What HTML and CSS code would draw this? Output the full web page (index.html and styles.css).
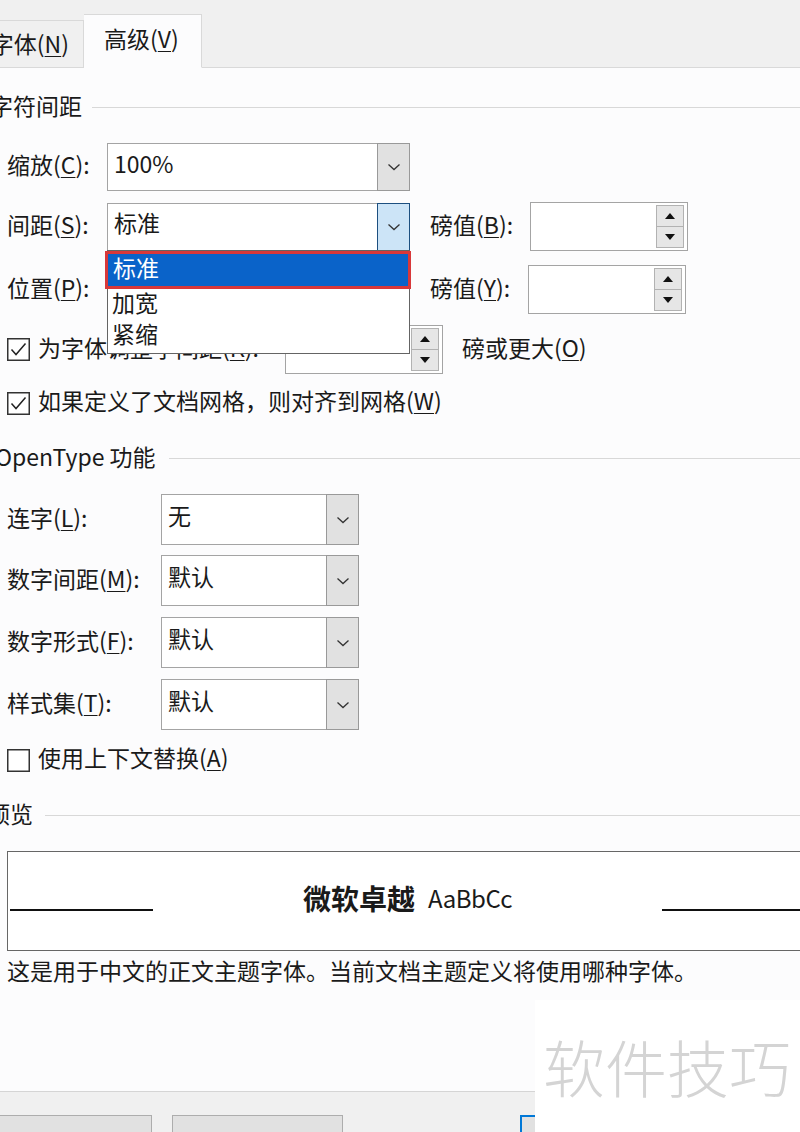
FILE: index.html
```html
<!DOCTYPE html>
<html lang="zh-CN">
<head>
<meta charset="utf-8">
<title>字体 - 高级</title>
<link rel="stylesheet" href="styles.css">
</head>
<body>
<div class="dialog">
  <div class="tabbar">
    <div class="tab">字体(<u>N</u>)</div>
    <div class="tab active">高级(<u>V</u>)</div>
  </div>

  <div class="content">
    <div class="group-head head-1"><span class="head-text">字符间距</span><span class="head-line"></span></div>

    <div class="row row-scale">
      <span class="label lbl-a">缩放(<u>C</u>):</span>
      <div class="combo combo-a">
        <span class="value">100%</span>
        <span class="drop-btn"><svg class="chev" width="14" height="8" viewBox="0 0 14 8"><polyline points="1.5,1.5 7,6.5 12.5,1.5" fill="none" stroke="#333" stroke-width="1.3"/></svg></span>
      </div>
    </div>

    <div class="row row-spacing">
      <span class="label lbl-a">间距(<u>S</u>):</span>
      <div class="combo combo-a">
        <span class="value">标准</span>
        <span class="drop-btn hot"><svg class="chev" width="14" height="8" viewBox="0 0 14 8"><polyline points="1.5,1.5 7,6.5 12.5,1.5" fill="none" stroke="#333" stroke-width="1.3"/></svg></span>
        <ul class="droplist">
          <li class="selected">标准</li>
          <li>加宽</li>
          <li>紧缩</li>
        </ul>
      </div>
      <span class="label lbl-pt">磅值(<u>B</u>):</span>
      <div class="spin">
        <div class="spin-btns"><span class="sb"><i class="tri-up"></i></span><span class="sb"><i class="tri-down"></i></span></div>
      </div>
    </div>

    <div class="row row-position">
      <span class="label lbl-a">位置(<u>P</u>):</span>
      <div class="combo combo-a combo-under">
        <span class="value"></span>
        <span class="drop-btn"></span>
      </div>
      <span class="label lbl-pt2">磅值(<u>Y</u>):</span>
      <div class="spin">
        <div class="spin-btns"><span class="sb"><i class="tri-up"></i></span><span class="sb"><i class="tri-down"></i></span></div>
      </div>
    </div>

    <div class="row row-kern">
      <svg class="check" width="23" height="23" viewBox="0 0 23 23"><rect x="0.75" y="0.75" width="21.5" height="21.5" fill="#fff" stroke="#333" stroke-width="1.5"/><polyline points="4.5,11.5 9,16.5 18.5,5.5" fill="none" stroke="#222" stroke-width="1.5"/></svg>
      <span class="label kern-text">为字体调整字间距(<u>K</u>):</span>
      <div class="spin spin-kern">
        <div class="spin-btns"><span class="sb"><i class="tri-up"></i></span><span class="sb"><i class="tri-down"></i></span></div>
      </div>
      <span class="label kern-after">磅或更大(<u>O</u>)</span>
    </div>

    <div class="row row-grid">
      <svg class="check" width="23" height="23" viewBox="0 0 23 23"><rect x="0.75" y="0.75" width="21.5" height="21.5" fill="#fff" stroke="#333" stroke-width="1.5"/><polyline points="4.5,11.5 9,16.5 18.5,5.5" fill="none" stroke="#222" stroke-width="1.5"/></svg>
      <span class="label check-text">如果定义了文档网格，则对齐到网格(<u>W</u>)</span>
    </div>

    <div class="group-head head-2"><span class="head-text">OpenType 功能</span><span class="head-line"></span></div>

    <div class="row row-ot ot-1">
      <span class="label lbl-b">连字(<u>L</u>):</span>
      <div class="combo combo-b">
        <span class="value">无</span>
        <span class="drop-btn"><svg class="chev" width="14" height="8" viewBox="0 0 14 8"><polyline points="1.5,1.5 7,6.5 12.5,1.5" fill="none" stroke="#333" stroke-width="1.3"/></svg></span>
      </div>
    </div>
    <div class="row row-ot ot-2">
      <span class="label lbl-b">数字间距(<u>M</u>):</span>
      <div class="combo combo-b">
        <span class="value">默认</span>
        <span class="drop-btn"><svg class="chev" width="14" height="8" viewBox="0 0 14 8"><polyline points="1.5,1.5 7,6.5 12.5,1.5" fill="none" stroke="#333" stroke-width="1.3"/></svg></span>
      </div>
    </div>
    <div class="row row-ot ot-3">
      <span class="label lbl-b">数字形式(<u>F</u>):</span>
      <div class="combo combo-b">
        <span class="value">默认</span>
        <span class="drop-btn"><svg class="chev" width="14" height="8" viewBox="0 0 14 8"><polyline points="1.5,1.5 7,6.5 12.5,1.5" fill="none" stroke="#333" stroke-width="1.3"/></svg></span>
      </div>
    </div>
    <div class="row row-ot ot-3">
      <span class="label lbl-b">样式集(<u>T</u>):</span>
      <div class="combo combo-b">
        <span class="value">默认</span>
        <span class="drop-btn"><svg class="chev" width="14" height="8" viewBox="0 0 14 8"><polyline points="1.5,1.5 7,6.5 12.5,1.5" fill="none" stroke="#333" stroke-width="1.3"/></svg></span>
      </div>
    </div>

    <div class="row row-ctx">
      <svg class="check" width="23" height="23" viewBox="0 0 23 23"><rect x="0.75" y="0.75" width="21.5" height="21.5" fill="#fff" stroke="#333" stroke-width="1.5"/></svg>
      <span class="label check-text">使用上下文替换(<u>A</u>)</span>
    </div>

    <div class="group-head head-3"><span class="head-text">预览</span><span class="head-line"></span></div>

    <div class="preview">
      <span class="pline pline-left"></span>
      <span class="sample"><b class="sample-cjk">微软卓越</b><span class="sample-latin">AaBbCc</span></span>
      <span class="pline pline-right"></span>
    </div>

    <div class="desc">这是用于中文的正文主题字体。当前文档主题定义将使用哪种字体。</div>
  </div>

  <div class="footer">
    <span class="btn btn-1">设为默认值(<u>D</u>)</span>
    <span class="btn btn-2">文字效果(<u>E</u>)...</span>
    <span class="btn btn-3">确定</span>
  </div>

  <div class="watermark">软件技巧</div>
</div>
</body>
</html>
```

FILE: styles.css
```css
* { box-sizing: border-box; }

html, body {
  margin: 0;
  padding: 0;
}

body {
  width: 800px;
  height: 1132px;
  overflow: hidden;
  background: #fcfcfd;
  font-family: "Noto Sans CJK SC", "Noto Sans", sans-serif;
  font-size: 23px;
  color: #1a1a1a;
}

u { text-decoration-thickness: 1px; text-underline-offset: 3px; }

.dialog {
  position: relative;
  display: flex;
  flex-direction: column;
  height: 1132px;
}

/* tabs */
.tabbar {
  height: 68px;
  flex: none;
  background: #f0f0f0;
  border-bottom: 1px solid #d9d9d9;
  display: flex;
  align-items: flex-end;
}

.tab {
  height: 48px;
  width: 84px;
  margin-bottom: -1px;
  border: 1px solid #d9d9d9;
  border-left: none;
  border-bottom: 1px solid #d9d9d9;
  background: #f0f0f0;
  display: flex;
  align-items: center;
  justify-content: flex-end;
  padding-right: 14px;
  padding-bottom: 2px;
  white-space: nowrap;
  line-height: 1;
}

.tab.active {
  height: 54px;
  width: 118px;
  background: #fcfcfd;
  border-bottom-color: #fcfcfd;
  justify-content: flex-start;
  padding-left: 20px;
  padding-bottom: 6px;
}

.content {
  padding-left: 7px;
  flex: none;
}

/* group headers */
.group-head {
  display: flex;
  align-items: center;
  height: 30px;
}

.head-text {
  white-space: nowrap;
  line-height: 1;
  padding-bottom: 5px;
}

.head-line {
  flex: 1;
  height: 1px;
  background: #d8d8d8;
  margin-left: 10px;
  margin-top: -1px;
}

.head-1 { margin-top: 25px; }
.head-1 .head-text { margin-left: -17px; }

.head-2 { margin-top: 26px; }
.head-2 .head-text { margin-left: -12px; }
.head-2 .head-line { margin-left: 13px; }

.head-3 { margin-top: 26px; }
.head-3 .head-text { margin-left: -20px; }
.head-3 .head-line { margin-left: 12px; }

/* rows */
.row {
  display: flex;
  align-items: center;
}

.label {
  white-space: nowrap;
  line-height: 1;
  flex: none;
  padding-bottom: 5px;
}

.lbl-a { width: 100px; }
.lbl-b { width: 154px; }
.lbl-pt { width: 100px; margin-left: 20px; }
.lbl-pt2 { width: 98px; margin-left: 20px; }

.row-scale { margin-top: 20px; }
.row-spacing { margin-top: 11px; }
.row-position { margin-top: 14px; }
.row-kern { margin-top: 11px; }
.row-grid { margin-top: 14px; height: 30px; }
.ot-1 { margin-top: 20px; }
.ot-2 { margin-top: 10px; }
.ot-3 { margin-top: 11px; }
.row-ctx { margin-top: 15px; height: 30px; }

/* combo boxes */
.combo {
  position: relative;
  display: flex;
  flex: none;
  border: 1px solid #a4a4a4;
  background: #fff;
}

.combo-a { width: 303px; height: 48px; }
.combo-b { width: 198px; height: 51px; }

.value {
  flex: 1;
  display: flex;
  align-items: center;
  padding-left: 6px;
  padding-bottom: 8px;
  line-height: 1;
}

.drop-btn {
  width: 33px;
  margin: -1px -1px -1px 0;
  border: 1px solid #999;
  background: #e1e1e1;
  display: flex;
  align-items: center;
  justify-content: center;
}

.drop-btn.hot {
  background: #cce4f7;
  border-color: #1c4f80;
}

.chev { display: block; }

/* dropdown list (open menu) */
.droplist {
  position: absolute;
  left: -1px;
  top: 100%;
  z-index: 5;
  width: 303px;
  height: 104px;
  margin: 0;
  padding: 0;
  list-style: none;
  background: #fff;
  border: 1px solid #646464;
}

.droplist li {
  height: 31px;
  display: flex;
  align-items: center;
  padding-left: 4px;
  padding-bottom: 4px;
  line-height: 1;
}

.droplist li.selected {
  height: 38px;
  margin: 0 -2px 0 -3px;
  border: 3px solid #d8383a;
  background: #0a63c9;
  color: #fff;
  padding-left: 5px;
}

/* spinners */
.spin {
  display: flex;
  justify-content: flex-end;
  flex: none;
  width: 158px;
  height: 49px;
  border: 1px solid #a4a4a4;
  background: #fff;
  padding: 2px 3px;
}

.spin-btns {
  width: 28px;
  display: flex;
  flex-direction: column;
}

.sb {
  flex: 1;
  border: 1px solid #b2b2b2;
  background: #e6e6e6;
  display: flex;
  align-items: center;
  justify-content: center;
}

.sb + .sb { border-top: none; }

.tri-up, .tri-down {
  display: block;
  width: 0;
  height: 0;
  border-left: 5px solid transparent;
  border-right: 5px solid transparent;
}

.tri-up { border-bottom: 6px solid #111; }
.tri-down { border-top: 6px solid #111; }

/* checkboxes */
.check {
  flex: none;
  display: block;
  margin-right: 8px;
}

.kern-text { width: 247px; }
.kern-after { margin-left: 19px; }

/* preview */
.preview {
  margin-top: 20px;
  width: 806px;
  height: 100px;
  border: 1px solid #666;
  background: #fff;
  display: flex;
  align-items: center;
  justify-content: space-between;
  padding-left: 2px;
}

.pline {
  display: block;
  height: 2px;
  background: #111;
  margin-top: 18px;
}

.pline-left { width: 143px; }
.pline-right { width: 150px; }

.sample {
  display: flex;
  align-items: center;
  line-height: 1;
  white-space: nowrap;
  padding-bottom: 6px;
}

.sample-cjk {
  font-size: 28px;
  font-weight: 700;
}

.sample-latin {
  font-size: 24px;
  margin-left: 13px;
  letter-spacing: -0.5px;
}

.desc {
  margin-top: 6px;
  height: 30px;
  display: flex;
  align-items: center;
  line-height: 1;
  white-space: nowrap;
  padding-bottom: 4px;
}

/* footer */
.footer {
  margin-top: auto;
  flex: none;
  height: 41px;
  border-top: 1px solid #d5d5d5;
  background: #f0f0f0;
  display: flex;
  align-items: flex-start;
  padding-top: 23px;
}

.btn {
  flex: none;
  height: 46px;
  border: 1px solid #adadad;
  background: #e1e1e1;
  display: flex;
  align-items: center;
  justify-content: center;
  line-height: 1;
  white-space: nowrap;
  padding-top: 22px;
}

.btn-1 { margin-left: -30px; width: 182px; }
.btn-2 { margin-left: 20px; width: 171px; }
.btn-3 { margin-left: 177px; width: 170px; border: 2px solid #0078d7; }

/* watermark overlay */
.watermark {
  position: absolute;
  right: 0;
  bottom: 0;
  width: 265px;
  height: 132px;
  background: #fff;
  color: #d4d4d4;
  font-size: 62px;
  font-weight: 300;
  line-height: 1;
  display: flex;
  align-items: center;
  padding-left: 8px;
  white-space: nowrap;
}
```
